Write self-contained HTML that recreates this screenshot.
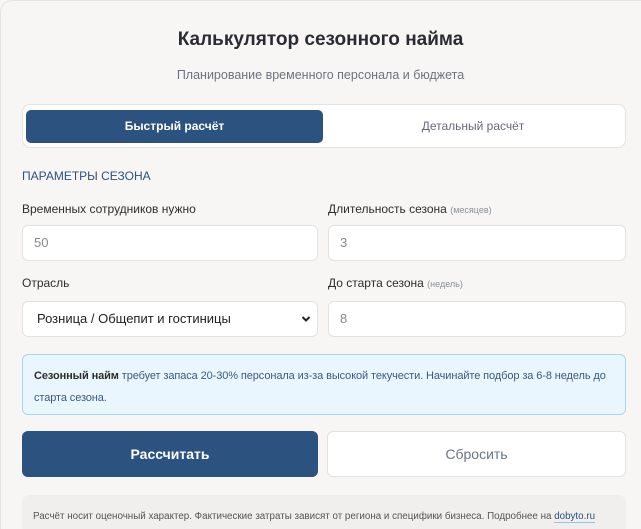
<!DOCTYPE html>
<html style="overflow:hidden;height:529px"><head><meta charset="utf-8"><style>
*{box-sizing:border-box;margin:0;padding:0}
body{width:641px;height:529px;overflow:hidden;background:#f7f6f4;font-family:"Liberation Sans","DejaVu Sans",sans-serif;color:#2d2d2d;position:relative}
.a{position:absolute}
.card{left:0;top:0;width:660px;height:529px;border:1px solid #e6e4e0;border-bottom:none;border-radius:12px 12px 0 0;background:#f7f6f4}
h1{position:absolute;left:0;width:641px;top:29px;text-align:center;font-size:19px;font-weight:bold;color:#2b2b33}
.sub{left:0;width:641px;top:68px;text-align:center;font-size:12.5px;color:#6b7383}
.tabs{left:22px;top:104px;width:604px;height:44px;background:#fff;border:1px solid #e3e3e3;border-radius:8px}
.t1{left:26px;top:110px;width:297px;height:33px;background:#2c5280;border-radius:5px;color:#fff;font-size:12px;font-weight:bold;text-align:center;line-height:33px}
.t2{left:323px;top:110px;width:300px;height:33px;color:#666a78;font-size:12px;text-align:center;line-height:33px}
.sec{left:22px;top:169px;font-size:12px;color:#2c5280}
.lb{font-size:12px;color:#2d2d2d}
.lb small{font-size:9px;color:#8a8f9a}
.in{background:#fff;border:1px solid #e2e2e2;border-radius:6px;height:36px;font-size:13px;color:#888;padding-left:11px;line-height:34px}
.info{left:22px;top:354px;width:604px;height:61px;background:#e9f6fd;border:1px solid #a6d7f2;border-radius:6px;padding:10px 11px;font-size:11px;line-height:22px;color:#3a5a80;letter-spacing:-0.1px}
.info b{color:#2d2d2d}
.b1{left:22px;top:431px;width:296px;height:46px;background:#2c5280;border-radius:6px;color:#fff;font-weight:bold;font-size:14px;text-align:center;line-height:46px}
.b2{left:327px;top:431px;width:299px;height:46px;background:#fff;border:1px solid #e2e2e2;border-radius:6px;color:#6b7383;font-size:14px;text-align:center;line-height:44px}
.ft{left:22px;top:495px;width:604px;height:40px;background:#f0efed;border-radius:8px;font-size:9.8px;color:#555;padding:16px 11px;white-space:nowrap}
.ft span{color:#2c5280;border-bottom:1px solid #8fc3ea}
</style></head><body>
<div class="a card"></div>
<h1>Калькулятор сезонного найма</h1>
<div class="a sub">Планирование временного персонала и бюджета</div>
<div class="a tabs"></div>
<div class="a t1">Быстрый расчёт</div>
<div class="a t2">Детальный расчёт</div>
<div class="a sec">ПАРАМЕТРЫ СЕЗОНА</div>
<div class="a lb" style="left:22px;top:202px">Временных сотрудников нужно</div>
<div class="a lb" style="left:328px;top:202px">Длительность сезона <small>(месяцев)</small></div>
<div class="a in" style="left:22px;top:225px;width:296px">50</div>
<div class="a in" style="left:328px;top:225px;width:298px">3</div>
<div class="a lb" style="left:22px;top:276px">Отрасль</div>
<div class="a lb" style="left:328px;top:276px">До старта сезона <small>(недель)</small></div>
<div class="a in" style="left:22px;top:301px;width:296px;color:#222;padding-left:14px">Розница / Общепит и гостиницы
<svg style="position:absolute;right:6px;top:13px" width="10" height="8" viewBox="0 0 10 8"><path d="M1.5 2 L5 5.5 L8.5 2" stroke="#222" stroke-width="2" fill="none"/></svg></div>
<div class="a in" style="left:328px;top:301px;width:298px">8</div>
<div class="a info"><b>Сезонный найм</b> требует запаса 20-30% персонала из-за высокой текучести. Начинайте подбор за 6-8 недель до старта сезона.</div>
<div class="a b1">Рассчитать</div>
<div class="a b2">Сбросить</div>
<div class="a ft">Расчёт носит оценочный характер. Фактические затраты зависят от региона и специфики бизнеса. Подробнее на <span>dobyto.ru</span></div>
</body></html>
